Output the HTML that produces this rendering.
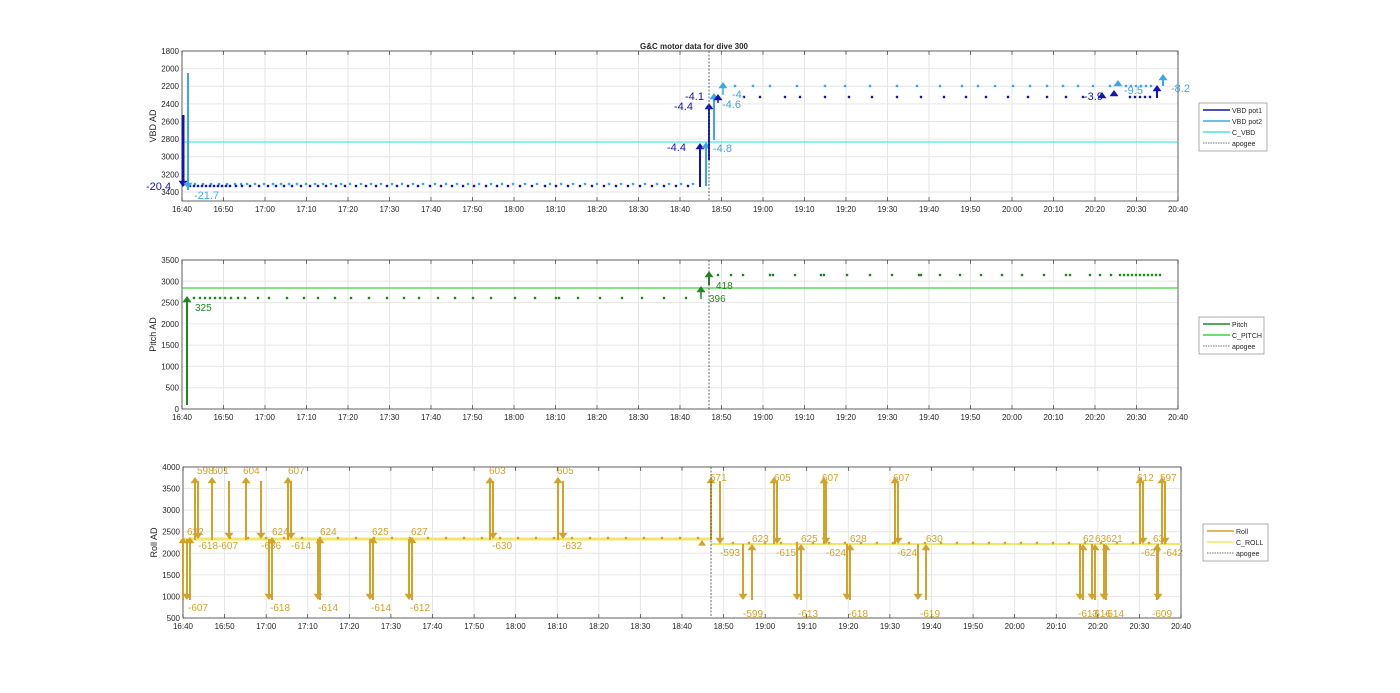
<!DOCTYPE html>
<html><head><meta charset="utf-8"><style>
html,body{margin:0;padding:0;background:#fff;width:1400px;height:693px;overflow:hidden}
svg{display:block;font-family:"Liberation Sans",sans-serif}
</style></head><body>
<svg id="s" width="1400" height="693" xmlns="http://www.w3.org/2000/svg"></svg>
<script>
const S=document.getElementById('s');let h='';
function add(x){h+=x;}
function txt(x,y,t,o){o=o||{};add(`<text x="${x}" y="${y}" font-size="${o.fs||8}" fill="${o.c||'#262626'}" text-anchor="${o.a||'start'}"${o.extra||''}>${t}</text>`);}
function line(x1,y1,x2,y2,c,w,d){add(`<line x1="${x1}" y1="${y1}" x2="${x2}" y2="${y2}" stroke="${c}" stroke-width="${w||1}"${d?` stroke-dasharray="${d}"`:''}/>`);}
function tri(x,y,up,c,s){s=s||5;const d=up?`M${x-s} ${y+s*1.4}L${x+s} ${y+s*1.4}L${x} ${y}Z`:`M${x-s} ${y-s*1.4}L${x+s} ${y-s*1.4}L${x} ${y}Z`;add(`<path d="${d}" fill="${c}"/>`);}
function arrow(x,y1,y2,c,w){line(x,y1,x,y2+(y2<y1?6:-6),c,w||2);tri(x,y2,y2<y1,c,4.5);}
function dot(x,y,c){add(`<rect x="${x-1.2}" y="${y-1.2}" width="2.4" height="2.4" fill="${c}"/>`);}
const labs=['16:40','16:50','17:00','17:10','17:20','17:30','17:40','17:50','18:00','18:10','18:20','18:30','18:40','18:50','19:00','19:10','19:20','19:30','19:40','19:50','20:00','20:10','20:20','20:30','20:40'];
function axes(x0,x1,y0,y1,yt,ylab){
  add(`<rect x="${x0}" y="${y0}" width="${x1-x0}" height="${y1-y0}" fill="#fff"/>`);
  const dx=(x1-x0)/24;
  for(let i=0;i<=24;i++){const x=x0+i*dx;line(x,y0,x,y1,'#e6e6e6',1);txt(x,y1+11,labs[i],{a:'middle'});}
  yt.forEach(([y,l])=>{line(x0,y,x1,y,'#e6e6e6',1);txt(x0-3,y+3,l,{a:'end'});});
  for(let i=0;i<=24;i++){const x=x0+i*dx;line(x,y1,x,y1-4,'#262626',0.6);line(x,y0,x,y0+4,'#262626',0.6);}
  add(`<rect x="${x0}" y="${y0}" width="${x1-x0}" height="${y1-y0}" fill="none" stroke="#262626" stroke-width="0.7"/>`);
  add(`<text transform="translate(${x0-26},${(y0+y1)/2}) rotate(-90)" font-size="9" fill="#262626" text-anchor="middle">${ylab}</text>`);
}
function legend(x,y,w,items){
  const hh=items.length*11+4;
  add(`<rect x="${x}" y="${y}" width="${w}" height="${hh}" fill="#fff" stroke="#999" stroke-width="0.8"/>`);
  items.forEach(([c,l,d],i)=>{const yy=y+7+i*11;line(x+4,yy,x+31,yy,c,d?0.8:1.5,d?'1.5,1':null);txt(x+33,yy+3,l,{fs:7});});
}
// title
txt(694,49,'G&amp;C motor data for dive 300',{fs:8,a:'middle',extra:' font-weight="bold"'});
// ===== top =====
let yt=[];for(let v=1800;v<=3400;v+=200)yt.push([51+(v-1800)*0.0881,v]);
axes(182,1178,51,201,yt,'VBD AD');
const DB='#1414b4',LB='#3aa8e8',CY='#44e6e6';
line(182,142,1178,142,CY,1.2);
// dots before apogee
const xs1=[190,194,198,202,206,210,214,218,222,226,230,236,242,250,259,268,276,284,292,301,310,318,326,336,345,356,366,376,387,397,408,418,430,441,452,463,474,486,497,508,520,532,545,556,568,580,592,604,616,628,640,652,664,676,688];
xs1.forEach((x,i)=>{dot(x,186,DB);if(i%2==0||i>10)dot(x+5,184,LB);});
const xs2=[744,760,785,800,825,849,872,897,921,944,966,986,1008,1028,1047,1066,1083,1130,1135,1140,1145,1150];
xs2.forEach(x=>{dot(x,97,DB);});
const xs3=[735,753,770,797,825,845,870,897,917,940,962,978,995,1013,1030,1047,1063,1078,1093,1110,1126,1131,1136,1141,1146,1151];
xs3.forEach(x=>dot(x,86,LB));
line(183,115,183,186,DB,3);tri(183,187,false,DB,4.5);
line(188,73,188,190,LB,2);tri(188,189,false,LB,4.5);
txt(146,190,'-20.4',{fs:11,c:DB});txt(194,199,'-21.7',{fs:11,c:LB});
arrow(700,187,143,DB);arrow(706,186,142,LB);
arrow(709,160,103,DB);arrow(714,140,93,LB);arrow(718,103,94,DB,1.5);arrow(723,95,82,LB,1.5);
txt(667,151,'-4.4',{fs:11,c:DB});txt(674,110,'-4.4',{fs:11,c:DB});txt(685,100,'-4.1',{fs:11,c:DB});
txt(722,108,'-4.6',{fs:11,c:LB});txt(713,152,'-4.8',{fs:11,c:LB});txt(732,98,'-4.',{fs:11,c:LB});
tri(1102,92,true,DB,4.5);tri(1114,90,true,DB,4.5);tri(1118,80,true,LB,4.5);
arrow(1157,98,85,DB);arrow(1163,86,74,LB);
txt(1084,100,'-3.9',{fs:11,c:DB});txt(1124,94,'-9.5',{fs:11,c:LB});txt(1171,92,'-8.2',{fs:11,c:LB});
line(709,51,709,201,'#555',0.9,'2,1.5');
legend(1199,103,68,[['#1414a0','VBD pot1'],[LB,'VBD pot2'],[CY,'C_VBD'],['#444','apogee',1]]);
// ===== middle =====
yt=[];for(let v=0;v<=3500;v+=500)yt.push([409-v*0.04257,v]);
axes(182,1178,260,409,yt,'Pitch AD');
const G='#1e8a1e',LG='#3ed23e';
line(182,288,1178,288,LG,1.2);
[194,200,205,210,215,220,225,231,238,245,258,269,287,304,318,335,351,369,387,404,419,438,455,473,491,515,535,556,559,578,600,622,642,664,686].forEach(x=>dot(x,298,G));
[718,731,743,770,773,795,821,824,847,870,892,919,921,940,960,981,1002,1022,1044,1066,1070,1090,1100,1111,1120,1124,1128,1132,1136,1140,1144,1148,1152,1156,1160].forEach(x=>dot(x,275,G));
arrow(187,405,296,G);txt(195,311,'325',{fs:10,c:G});
arrow(701,299,286,G,1.5);txt(709,302,'396',{fs:10,c:G});
arrow(709,285,271,G,2);txt(716,289,'418',{fs:10,c:G});
line(709,260,709,409,'#555',0.9,'2,1.5');
legend(1199,317,65,[[G,'Pitch'],[LG,'C_PITCH'],['#444','apogee',1]]);
// ===== bottom =====
yt=[];for(let v=500;v<=4000;v+=500)yt.push([618-(v-500)*0.04314,v]);
axes(183,1181,467,618,yt,'Roll AD');
const O='#d2a32a',Y='#f2e66a';
line(183,539,711,539,Y,3);line(711,544,1181,544,Y,2);
for(let x=230;x<700;x+=18)dot(x,538,O);
for(let x=733;x<1180;x+=16)dot(x,543,O);
const T=477,B=600;
function up(x,y0,y1,l,lx,ly){arrow(x,y0,y1,O,2);if(l)txt(lx,ly,l,{fs:10,c:O});}
// up to top
[[195,540,598,197,474],[212,540,601,212,474],[246,540,604,243,474],[288,540,607,288,474],[490,540,603,489,474],[558,540,605,557,474],[711,540,571,710,481],[774,544,605,774,481],[824,544,607,822,481],[895,544,607,893,481],[1140,544,612,1137,481],[1162,544,597,1160,481]].forEach(a=>{arrow(a[0],a[1],T,O,2);txt(a[3],a[4],a[2],{fs:10,c:O});});
// down from top
[[198,'-618',198,549],[229,'-607',218,549],[261,'-636',261,549],[291,'-614',291,549],[493,'-630',492,549],[563,'-632',562,549],[720,'-593',720,556],[777,'-615',776,556],[826,'-624',826,556],[898,'-624',897,556],[1143,'-627',1141,556],[1165,'-642',1163,556]].forEach(a=>{arrow(a[0],T+4,a[0]>700?544:539,O,2);txt(a[2],a[3],a[1],{fs:10,c:O});});
// down to bottom
[[187,'-607',188,611],[269,'-618',270,611],[318,'-614',318,611],[370,'-614',371,611],[409,'-612',410,611],[743,'-599',743,617],[797,'-613',798,617],[847,'-618',848,617],[918,'-619',920,617],[1080,'-613',1078,617],[1092,'-616',1091,617],[1104,'-614',1104,617],[1158,'-609',1152,617]].forEach(a=>{arrow(a[0],a[0]>700?544:539,B,O,2);txt(a[2],a[3],a[1],{fs:10,c:O});});
// up from bottom
[[183,'',0,0],[190,'622',187,535],[272,'624',272,535],[320,'624',320,535],[373,'625',372,535],[412,'627',411,535],[752,'623',752,542],[801,'625',801,542],[850,'628',850,542],[926,'630',926,542],[1083,'62',1083,542],[1095,'63',1095,542],[1106,'621',1106,542],[1157,'63',1153,542]].forEach(a=>{arrow(a[0],B,a[0]>700?544:537,O,2);if(a[1])txt(a[2],a[3],a[1],{fs:10,c:O});});
tri(702,540,true,O,4);
line(711,467,711,618,'#555',0.9,'2,1.5');
legend(1203,524,65,[[O,'Roll'],[Y,'C_ROLL'],['#444','apogee',1]]);
S.innerHTML=h;
</script>
</body></html>
